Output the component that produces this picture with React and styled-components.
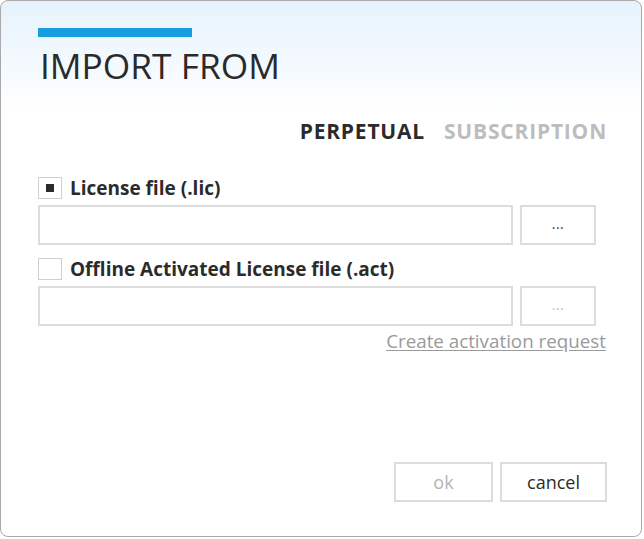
import React from "react";
import styled, { createGlobalStyle } from "styled-components";

const Global = createGlobalStyle`
  html, body { margin: 0; padding: 0; background: #ffffff; }
  body { font-family: "Open Sans", "Noto Sans", sans-serif; }
`;

const Dialog = styled.div`
  box-sizing: border-box;
  width: 642px;
  height: 537px;
  border: 1px solid #a9a9a9;
  border-radius: 8px;
  background: linear-gradient(to bottom, #e6f3fc 0px, #f3f9fe 60px, #ffffff 110px, #ffffff 100%);
  padding: 27px 35px 0 37px;
  display: flex;
  flex-direction: column;
`;

const AccentBar = styled.div`
  width: 154px;
  height: 9px;
  background: #179ee0;
`;

const Title = styled.h1`
  margin: 6px 0 0 2px;
  font-family: "Open Sans", sans-serif;
  font-weight: 400;
  font-size: 35.3px;
  line-height: 44px;
  color: #2a2a2a;
`;

const Tabs = styled.div`
  display: flex;
  justify-content: flex-end;
  gap: 19px;
  margin-top: 30px;
  margin-right: -1px;
`;

const Tab = styled.span`
  font-weight: 700;
  font-size: 21px;
  line-height: 28px;
  letter-spacing: 0.8px;
  color: ${(p) => (p.$active ? "#2b2b2b" : "#bdbdbd")};
`;

const Section = styled.div`
  display: flex;
  flex-direction: column;
  margin-top: ${(p) => p.$mt}px;
`;

const CheckRow = styled.label`
  display: flex;
  align-items: center;
  gap: 8px;
  height: 22px;
`;

const Box = styled.span`
  box-sizing: border-box;
  width: 24px;
  height: 22px;
  border: 1px solid #cfcfcf;
  background: #fff;
  display: flex;
  align-items: center;
  justify-content: center;
`;

const Mark = styled.span`
  width: 8px;
  height: 8px;
  background: #2b2b2b;
`;

const Label = styled.span`
  font-weight: 700;
  font-size: 19px;
  color: #2b2b2b;
`;

const FieldRow = styled.div`
  display: flex;
  gap: 7px;
  margin-top: 6px;
`;

const Input = styled.div`
  box-sizing: border-box;
  width: 475px;
  height: 40px;
  border: 2px solid #dcdcdc;
  background: #fff;
`;

const Button = styled.button`
  box-sizing: border-box;
  width: ${(p) => p.$w}px;
  height: 40px;
  border: 2px solid #dcdcdc;
  background: #fff;
  font-family: "Open Sans", sans-serif;
  font-size: 18px;
  color: ${(p) => (p.$disabled ? "#b4b4b4" : "#2b2b2b")};
  padding: 0;
  display: flex;
  align-items: center;
  justify-content: center;
  line-height: 1;
`;

const Dots = styled.span`
  font-size: 14px;
  letter-spacing: 0.5px;
  color: ${(p) => (p.$disabled ? "#b8b8b8" : "#333")};
  transform: translateY(-1px);
`;

const LinkRow = styled.div`
  display: flex;
  justify-content: flex-end;
  margin-top: 2px;
`;

const Link = styled.a`
  font-size: 18.8px;
  color: #9a9a9a;
  text-decoration: underline;
  text-underline-offset: 2px;
`;

const Footer = styled.div`
  display: flex;
  justify-content: flex-end;
  gap: 7px;
  margin-top: auto;
  margin-bottom: 34px;
  margin-right: -1px;
`;

export default function App() {
  return (
    <>
      <Global />
      <Dialog>
        <AccentBar />
        <Title>IMPORT FROM</Title>
        <Tabs>
          <Tab $active>PERPETUAL</Tab>
          <Tab>SUBSCRIPTION</Tab>
        </Tabs>
        <Section $mt={32}>
          <CheckRow>
            <Box>
              <Mark />
            </Box>
            <Label>License file (.lic)</Label>
          </CheckRow>
          <FieldRow>
            <Input />
            <Button $w={76}>
              <Dots>...</Dots>
            </Button>
          </FieldRow>
        </Section>
        <Section $mt={13}>
          <CheckRow>
            <Box />
            <Label>Offline Activated License file (.act)</Label>
          </CheckRow>
          <FieldRow>
            <Input />
            <Button $w={76} $disabled>
              <Dots $disabled>...</Dots>
            </Button>
          </FieldRow>
        </Section>
        <LinkRow>
          <Link>Create activation request</Link>
        </LinkRow>
        <Footer>
          <Button $w={99} $disabled>ok</Button>
          <Button $w={107}>cancel</Button>
        </Footer>
      </Dialog>
    </>
  );
}
